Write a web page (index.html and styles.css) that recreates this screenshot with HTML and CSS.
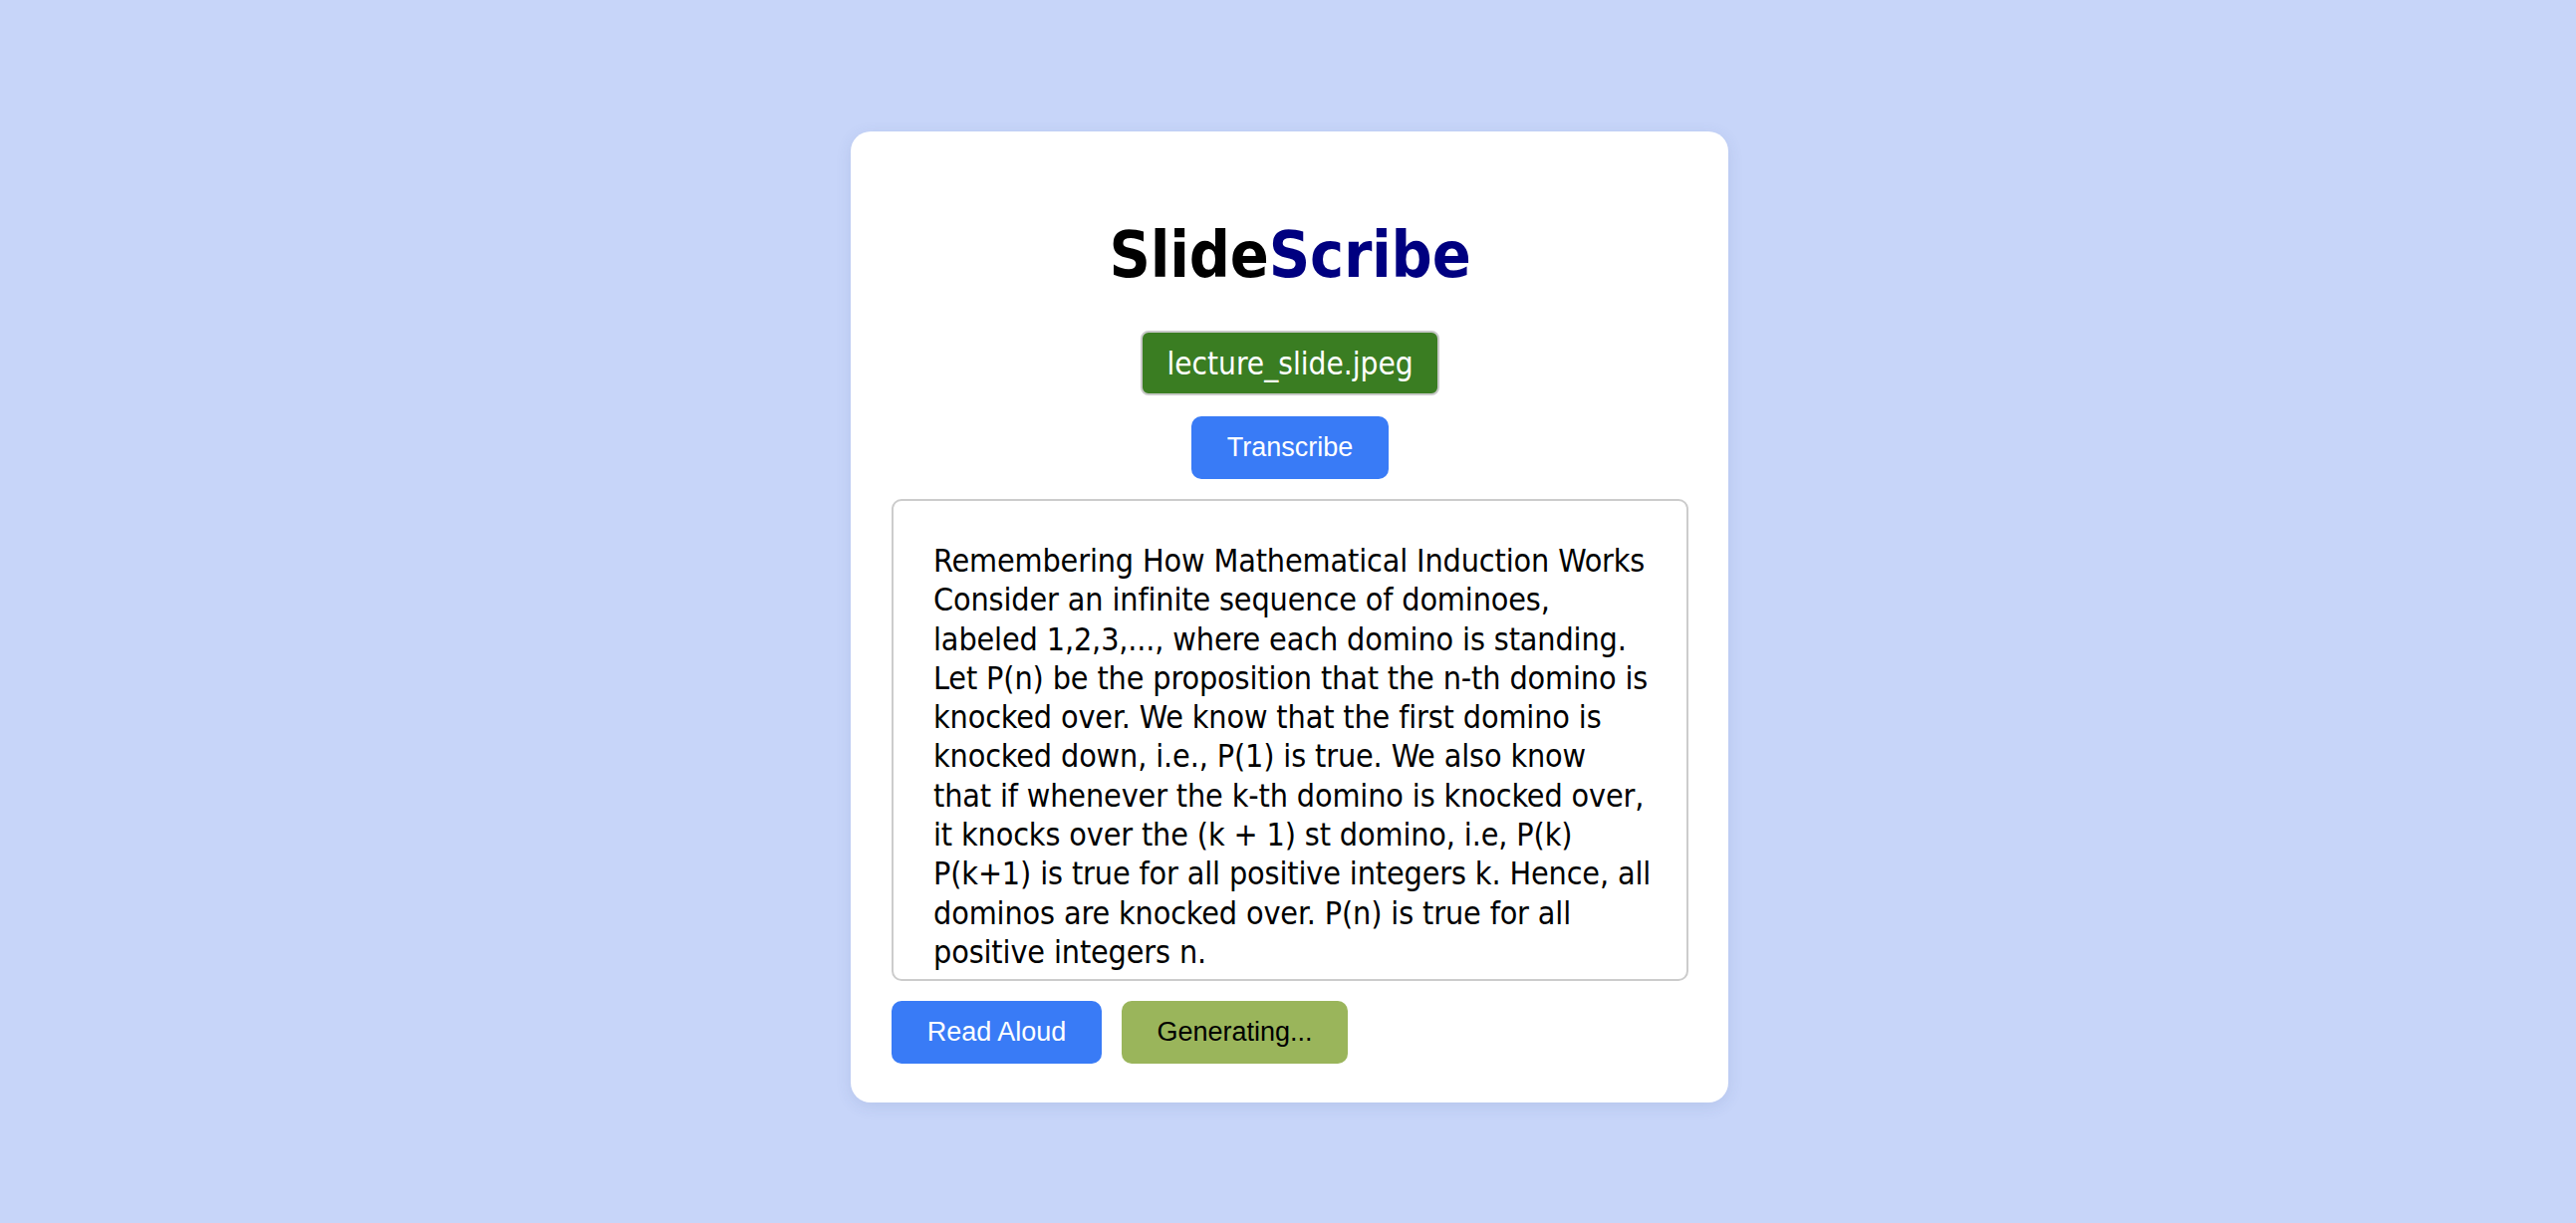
FILE: index.html
```html
<!DOCTYPE html>
<html lang="en">
<head>
<meta charset="utf-8">
<title>SlideScribe</title>
<link rel="stylesheet" href="styles.css">
</head>
<body>
<main class="card">
  <h1 class="title"><span class="title-a">Slide</span><span class="title-b">Scribe</span></h1>
  <div class="file-row"><span class="file-badge">lecture_slide.jpeg</span></div>
  <div class="center-row"><button class="btn btn-blue">Transcribe</button></div>
  <div class="output">Remembering How Mathematical Induction Works<br>Consider an infinite sequence of dominoes,<br>labeled 1,2,3,..., where each domino is standing.<br>Let P(n) be the proposition that the n-th domino is<br>knocked over. We know that the first domino is<br>knocked down, i.e., P(1) is true. We also know<br>that if whenever the k-th domino is knocked over,<br>it knocks over the (k + 1) st domino, i.e, P(k)<br>P(k+1) is true for all positive integers k. Hence, all<br>dominos are knocked over. P(n) is true for all<br>positive integers n.</div>
  <div class="actions">
    <button class="btn btn-blue btn-read">Read Aloud</button>
    <button class="btn btn-olive">Generating...</button>
  </div>
</main>
</body>
</html>
```

FILE: styles.css
```css
html, body {
  margin: 0;
  padding: 0;
}
body {
  background: #c7d5f9;
  min-height: 1228px;
  padding-left: 3px;
  display: flex;
  justify-content: center;
  align-items: flex-start;
  font-family: "DejaVu Sans Condensed", "DejaVu Sans", sans-serif;
}
.card {
  box-sizing: border-box;
  width: 881px;
  margin-top: 132px;
  padding: 40px 40px 39px 41px;
  background: #ffffff;
  border-radius: 20px;
  box-shadow: 0 4px 16px rgba(60, 80, 140, 0.12);
  display: flex;
  flex-direction: column;
}
.title {
  margin: 45px 0 37px;
  text-align: center;
  font-size: 64px;
  line-height: 78px;
  font-weight: bold;
  letter-spacing: -0.2px;
}
.title-a { color: #000000; }
.title-b { color: #000080; }
.file-row, .center-row {
  display: flex;
  justify-content: center;
}
.file-badge {
  box-sizing: border-box;
  height: 65px;
  padding: 0 24px;
  display: inline-flex;
  align-items: center;
  background: #3a7d22;
  color: #ffffff;
  border: 2px solid #c9c9c9;
  border-radius: 8px;
  font-size: 31.3px;
}
.center-row {
  margin-top: 21px;
}
.btn {
  box-sizing: border-box;
  height: 63px;
  border: none;
  border-radius: 10px;
  font-family: "Liberation Sans", Arial, sans-serif;
  font-size: 27px;
  cursor: pointer;
}
.btn-blue {
  background: #397bf6;
  color: #ffffff;
  width: 198px;
}
.output {
  box-sizing: border-box;
  margin-top: 20px;
  height: 484px;
  padding: 41px 40px 0 40px;
  border: 2px solid #cccccc;
  border-radius: 10px;
  font-size: 32px;
  line-height: 39.3px;
  letter-spacing: -0.13px;
  color: #000000;
  white-space: nowrap;
  overflow: hidden;
}
.actions {
  margin-top: 20px;
  display: flex;
  gap: 20px;
}
.btn-read {
  width: 211px;
}
.btn-olive {
  width: 227px;
  background: #9ab55b;
  color: #000000;
}
```
